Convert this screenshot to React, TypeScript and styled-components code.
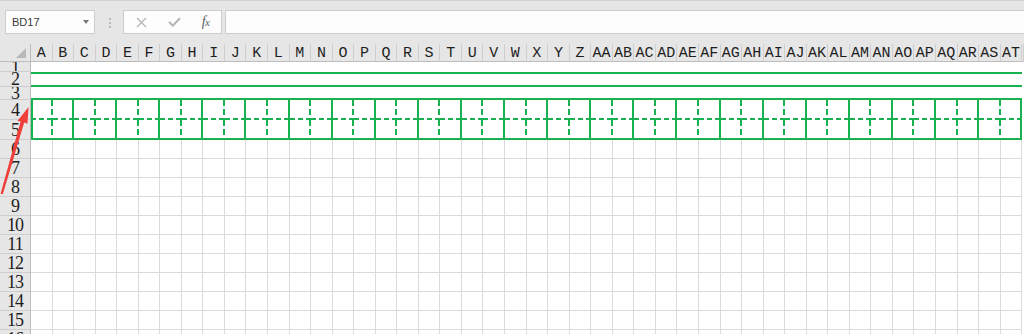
import React from 'react';
import styled, { createGlobalStyle, css } from 'styled-components';

const GREEN = '#17b152';
const GRID = '#dadada';
const HEAD_BG = '#e6e6e6';

const GlobalStyle = createGlobalStyle`
  *, *::before, *::after { box-sizing: border-box; }
  html, body { margin: 0; padding: 0; background: #fff; }
  body {
    width: 1024px;
    height: 334px;
    overflow: hidden;
    font-family: "Liberation Sans", Arial, sans-serif;
  }
`;

const Page = styled.div`
  position: relative;
  width: 1024px;
  height: 334px;
  overflow: hidden;
  display: flex;
  flex-direction: column;
`;

/* formula bar */
const FormulaBar = styled.div`
  display: flex;
  align-items: flex-start;
  flex: 0 0 44px;
  padding: 9px 0 0 5px;
  background: ${HEAD_BG};
  border-top: 1px solid #d2d2d2;
`;

const Field = styled.div`
  height: 24px;
  background: #fdfdfd;
  border: 1px solid #cdcdcd;
  display: flex;
  align-items: center;
`;

const NameBox = styled(Field)`
  width: 90px;
  padding: 0 5px 0 6px;
  justify-content: space-between;
  font-size: 11px;
  color: #3a3a3a;
`;

const Caret = styled.span`
  width: 0;
  height: 0;
  border-left: 3.5px solid transparent;
  border-right: 3.5px solid transparent;
  border-top: 4px solid #777;
`;

const Grip = styled.div`
  display: flex;
  flex-direction: column;
  gap: 2px;
  margin: 8px 12px 0 14px;

  span {
    width: 2px;
    height: 2px;
    background: #b8b8b8;
  }
`;

const FxBox = styled(Field)`
  width: 99px;
  justify-content: space-around;
  padding: 0 1px;
`;

const Fx = styled.span`
  font-family: "Liberation Serif", serif;
  font-style: italic;
  font-size: 14px;
  color: #5e5e5e;
  letter-spacing: -0.5px;

  small {
    font-size: 11px;
  }
`;

const FormulaInput = styled(Field)`
  flex: 1;
  margin-left: 3px;
  border-right: none;
`;

/* sheet */
const Sheet = styled.div`
  flex: 1;
  display: grid;
  grid-template-columns: 31px repeat(46, 21.55px) 1fr;
  grid-template-rows: 18px 10px 15px 13px 20px 20px repeat(11, 19px);
  overflow: hidden;
`;

const Corner = styled.div`
  background: ${HEAD_BG};
  border-right: 1px solid #bdbdbd;
  border-bottom: 1px solid #bdbdbd;
  display: flex;
  justify-content: flex-end;
  align-items: flex-end;
  padding: 0 4px 3px 0;

  &::after {
    content: '';
    width: 0;
    height: 0;
    border-left: 10px solid transparent;
    border-bottom: 10px solid #b9b9b9;
  }
`;

const ColHead = styled.div`
  background: ${HEAD_BG};
  border-right: 1px solid #cecece;
  border-bottom: 1px solid #bdbdbd;
  display: flex;
  align-items: center;
  justify-content: center;
  padding-top: 1px;
  font-family: "Liberation Mono", monospace;
  font-size: 15px;
  color: #1e1e1e;
  white-space: nowrap;
  overflow: hidden;
`;

const RowHead = styled.div`
  background: ${HEAD_BG};
  border-right: 1px solid #bdbdbd;
  border-bottom: 1px solid #cdcdcd;
  display: flex;
  align-items: center;
  justify-content: center;
  font-family: "Liberation Serif", serif;
  font-size: 18px;
  line-height: 1;
  letter-spacing: -1px;
  color: #1e1e1e;
  overflow: hidden;
`;

const Cell = styled.div`
  border-right: 1px solid ${GRID};
  border-bottom: 1px solid ${GRID};
`;

const Tail = styled.div`
  background: #fff;
`;

const Band = styled.div<{ $top?: boolean; $bottom?: boolean }>`
  grid-column: span 46;
  ${(p) => p.$top && css`border-top: 2px solid ${GREEN};`}
  ${(p) => p.$bottom && css`border-bottom: 2px solid ${GREEN};`}
`;

type Line = 'solid' | 'dashed';

const vLine = (kind: Line) =>
  kind === 'solid'
    ? `linear-gradient(${GREEN}, ${GREEN})`
    : `repeating-linear-gradient(to bottom, ${GREEN} 0 6px, transparent 6px 9px)`;

const hLine = (kind: Line) =>
  kind === 'solid'
    ? `linear-gradient(${GREEN}, ${GREEN})`
    : `repeating-linear-gradient(to right, ${GREEN} 0 5px, transparent 5px 8px)`;

/** one half of a 田 box: right edge + bottom edge, first column also gets the left edge */
const BoxCell = styled.div<{ $right: Line; $bottom: Line; $first?: boolean }>`
  background-repeat: no-repeat;
  background-image: ${(p) =>
    [vLine(p.$right), hLine(p.$bottom), p.$first ? vLine('solid') : null]
      .filter(Boolean)
      .join(', ')};
  background-position: ${(p) =>
    ['right top', 'left bottom', p.$first ? 'left top' : null].filter(Boolean).join(', ')};
  background-size: ${(p) =>
    ['2px 100%', '100% 2px', p.$first ? '2px 100%' : null].filter(Boolean).join(', ')};
`;

const Arrow = styled.svg`
  position: absolute;
  left: 0;
  top: 0;
  pointer-events: none;
`;

const COLS = Array.from({ length: 46 }, (_, i) =>
  i < 26 ? String.fromCharCode(65 + i) : 'A' + String.fromCharCode(65 + i - 26),
);

const PLAIN_ROWS = Array.from({ length: 11 }, (_, i) => i + 6);

export default function App() {
  return (
    <Page>
      <GlobalStyle />
      <FormulaBar>
        <NameBox>
          <span>BD17</span>
          <Caret />
        </NameBox>
        <Grip>
          <span />
          <span />
          <span />
        </Grip>
        <FxBox>
          <svg width="11" height="11" viewBox="0 0 11 11">
            <path d="M1 1 L10 10 M10 1 L1 10" stroke="#b4b4b4" strokeWidth="1.3" />
          </svg>
          <svg width="13" height="10" viewBox="0 0 13 10">
            <path d="M1 5 L4.8 8.6 L12 1.2" stroke="#b4b4b4" strokeWidth="2" fill="none" />
          </svg>
          <Fx>
            f<small>x</small>
          </Fx>
        </FxBox>
        <FormulaInput />
      </FormulaBar>

      <Sheet>
        <Corner />
        {COLS.map((c) => (
          <ColHead key={c}>{c}</ColHead>
        ))}
        <ColHead />

        <RowHead>1</RowHead>
        <Band />
        <Tail />

        <RowHead>2</RowHead>
        <Band $top $bottom />
        <Tail />

        <RowHead>3</RowHead>
        <Band $bottom />
        <Tail />

        {[4, 5].map((r) => (
          <React.Fragment key={r}>
            <RowHead>{r}</RowHead>
            {COLS.map((c, i) => (
              <BoxCell
                key={c}
                $first={i === 0}
                $right={i % 2 === 0 ? 'dashed' : 'solid'}
                $bottom={r === 4 ? 'dashed' : 'solid'}
              />
            ))}
            <Tail />
          </React.Fragment>
        ))}

        {PLAIN_ROWS.map((r) => (
          <React.Fragment key={r}>
            <RowHead>{r}</RowHead>
            {COLS.map((c) => (
              <Cell key={c} />
            ))}
            <Tail />
          </React.Fragment>
        ))}
      </Sheet>

      <Arrow width="40" height="200" viewBox="0 0 40 200">
        <polygon
          points="28.6,107 27.4,123.8 24.2,122.6 2.8,194.3 0.6,193.7 20.6,121.6 17.4,121"
          fill="#f03e3a"
        />
      </Arrow>
    </Page>
  );
}
